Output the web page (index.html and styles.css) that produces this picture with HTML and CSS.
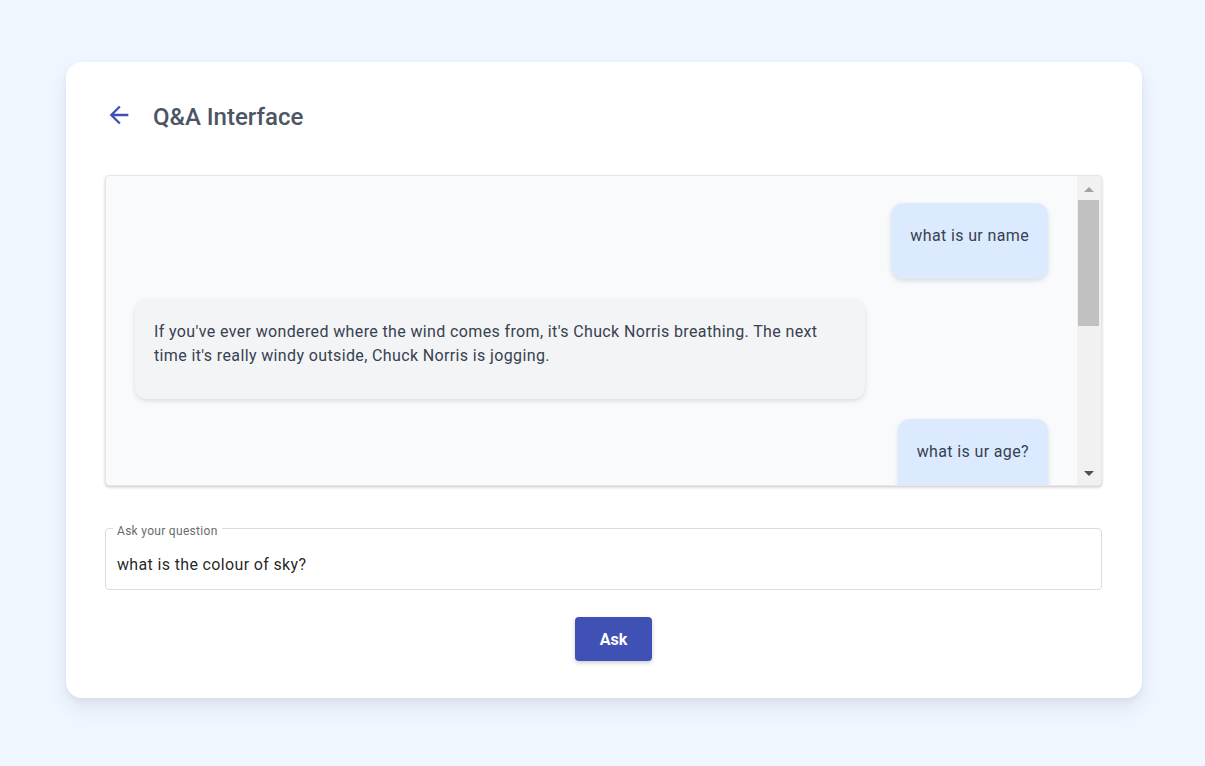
FILE: index.html
```html
<!DOCTYPE html>
<html lang="en">
<head>
<meta charset="utf-8">
<title>Q&amp;A Interface</title>
<link rel="stylesheet" href="styles.css">
</head>
<body>
<div class="page">
  <main class="card">
    <header class="header">
      <button class="back" aria-label="Back">
        <svg viewBox="0 0 24 24" width="28" height="28"><path d="M20 11H7.83l5.59-5.59L12 4l-8 8 8 8 1.41-1.41L7.83 13H20v-2z" fill="#3f51b5"/></svg>
      </button>
      <h1 class="title">Q&amp;A Interface</h1>
    </header>

    <section class="chat">
      <div class="messages">
        <div class="msg user"><div class="bubble">what is ur name</div></div>
        <div class="msg bot"><div class="bubble">If you've ever wondered where the wind comes from, it's Chuck Norris breathing. The next time it's really windy outside, Chuck Norris is jogging.</div></div>
        <div class="msg user"><div class="bubble">what is ur age?</div></div>
        <div class="msg bot"><div class="bubble">Chuck Norris doesn't have an age. Time simply asks Chuck Norris for permission before it passes, and he rarely grants it.</div></div>
      </div>
      <div class="scrollbar" aria-hidden="true">
        <div class="sb-btn sb-up"><span class="tri tri-up"></span></div>
        <div class="sb-track"><div class="sb-thumb"></div></div>
        <div class="sb-btn sb-down"><span class="tri tri-down"></span></div>
      </div>
    </section>

    <div class="field">
      <span class="label">Ask your question</span>
      <input class="input" type="text" value="what is the colour of sky?">
    </div>

    <div class="actions">
      <button class="ask">Ask</button>
    </div>
  </main>
</div>
</body>
</html>
```

FILE: styles.css
```css
* { box-sizing: border-box; }

html, body {
  margin: 0;
  padding: 0;
  background: #eff6ff;
  font-family: Roboto, "Liberation Sans", Arial, sans-serif;
}

.page {
  padding: 62px 63px 68px 66px;
}

.card {
  background: #ffffff;
  border-radius: 16px;
  box-shadow: 0 10px 20px rgba(30, 41, 59, 0.08), 0 3px 6px rgba(30, 41, 59, 0.05);
  padding: 39px 40px 37px 39px;
}

.header {
  display: flex;
  align-items: flex-start;
  gap: 20px;
  height: 32px;
}

.back {
  border: 0;
  background: none;
  padding: 0;
  margin: 0;
  width: 28px;
  height: 28px;
  cursor: pointer;
  display: block;
}

.back svg { display: block; }

.title {
  margin: 0;
  font-size: 24px;
  line-height: 32px;
  font-weight: 500;
  color: #4b5563;
}

.chat {
  margin-top: 42px;
  height: 311px;
  display: flex;
  background: #f9fafb;
  border: 1px solid #e5e7eb;
  border-radius: 4px;
  box-shadow: 0 1px 3px rgba(0, 0, 0, 0.16), 0 2px 3px rgba(0, 0, 0, 0.06);
  overflow: hidden;
}

.messages {
  flex: 1;
  min-width: 0;
  overflow: hidden;
  padding: 27px 29px 28px 29px;
  display: flex;
  flex-direction: column;
  gap: 20px;
}

.scrollbar {
  width: 24px;
  flex-shrink: 0;
  display: flex;
  flex-direction: column;
  background: #f1f1f1;
}

.sb-btn {
  height: 24px;
  flex-shrink: 0;
  display: flex;
  align-items: center;
  justify-content: center;
}

.sb-track {
  flex: 1;
  padding: 0 2px 0 1px;
}

.sb-thumb {
  height: 126px;
  background: #c1c1c1;
}

.tri {
  width: 0;
  height: 0;
  border-left: 5px solid transparent;
  border-right: 5px solid transparent;
}

.tri-up {
  border-bottom: 5px solid #a3a3a3;
  margin-top: 2px;
}

.tri-down {
  border-top: 5px solid #505050;
}

.msg {
  display: flex;
  flex-shrink: 0;
}

.msg.user { justify-content: flex-end; }
.msg.bot { justify-content: flex-start; }

.bubble {
  max-width: 80%;
  border-radius: 12px;
  padding: 21px 19px 31px 19px;
  font-size: 16px;
  line-height: 24px;
  letter-spacing: 0.37px;
  color: #374151;
  box-shadow: 0 2px 5px rgba(0, 0, 0, 0.12);
}

.user .bubble { background: #dbeafe; }
.bot .bubble { background: #f3f4f6; }

.field {
  position: relative;
  margin-top: 42px;
  height: 62px;
  border: 1px solid #dcdcdc;
  border-radius: 4px;
  display: flex;
  align-items: center;
  padding: 12px 11px 0 11px;
}

.label {
  position: absolute;
  top: -5px;
  left: 7px;
  padding: 0 4px;
  background: #ffffff;
  font-size: 12px;
  line-height: 14px;
  letter-spacing: 0.3px;
  color: #6b6b6b;
}

.input {
  width: 100%;
  height: 24px;
  border: 0;
  outline: none;
  background: transparent;
  font-family: Roboto, "Liberation Sans", Arial, sans-serif;
  font-size: 16px;
  line-height: 24px;
  letter-spacing: 0.35px;
  color: rgba(0, 0, 0, 0.87);
  padding: 0;
}

.actions {
  display: flex;
  justify-content: center;
  margin-top: 27px;
}

.ask {
  margin-left: 20px;
  width: 77px;
  height: 44px;
  border: 0;
  border-radius: 4px;
  background: #3f51b5;
  color: #ffffff;
  font-family: Roboto, "Liberation Sans", Arial, sans-serif;
  font-size: 16px;
  font-weight: 700;
  box-shadow: 0 2px 4px rgba(0, 0, 0, 0.2);
  cursor: pointer;
}
```
